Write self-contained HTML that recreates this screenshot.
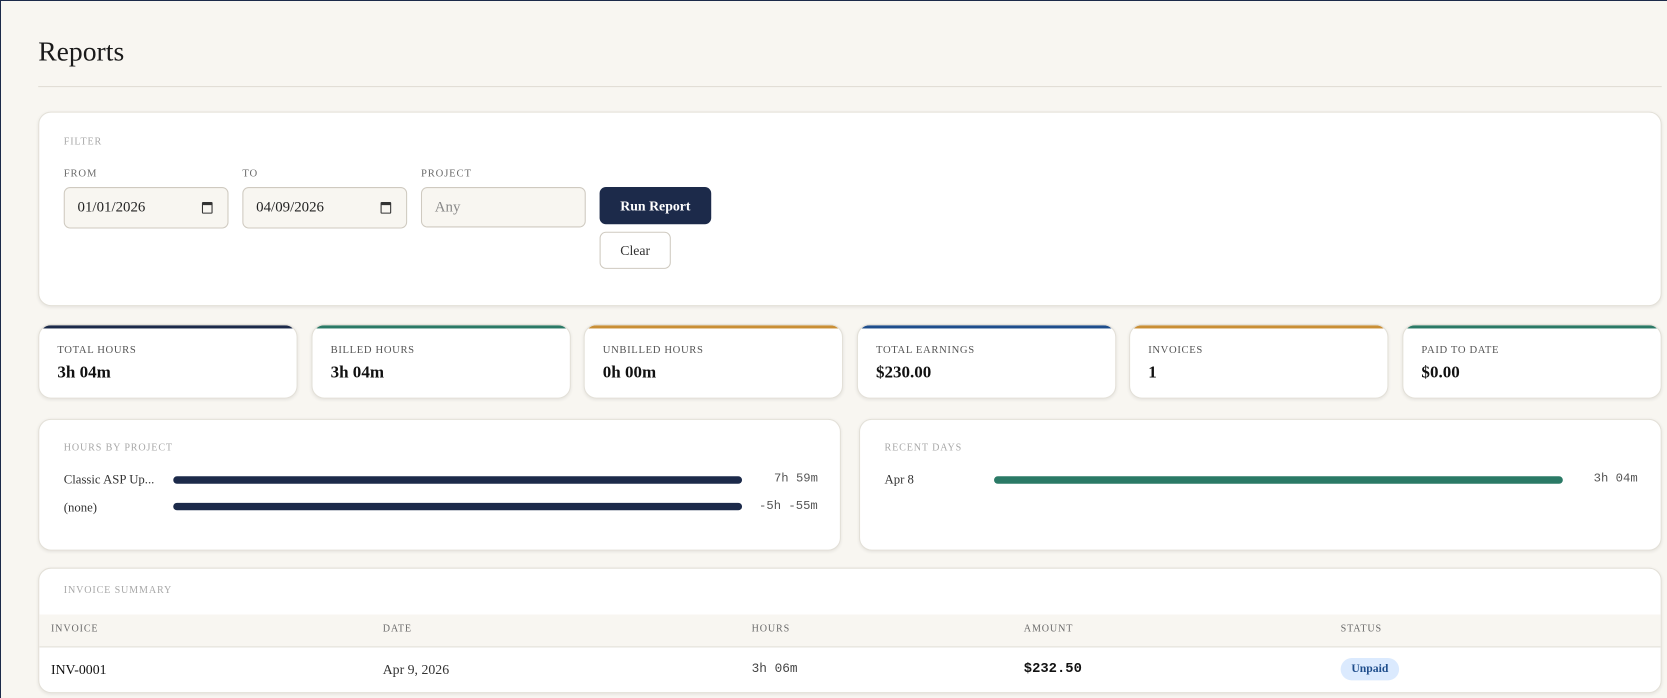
<!DOCTYPE html>
<html><head><style>
*{box-sizing:border-box;margin:0;padding:0}
html,body{width:1667px;height:698px;overflow:hidden}
body{background:#f8f6f1;font-family:"Liberation Serif",serif;color:#1a1a1a;position:relative;border-left:1px solid #1c2a4a;border-top:1px solid #1c2a4a}
#w{position:absolute;left:0;top:0;width:1568px;height:657px;transform:scale(1.0632);transform-origin:0 0}
.abs{position:absolute}
h1{position:absolute;left:35px;top:33px;font-weight:400;font-size:26px;color:#1a1a1a}
.hr{left:35px;top:80px;width:1527px;height:1px;background:#e0ddd5}
.card{position:absolute;background:#fff;border:1px solid #e3e0d8;border-radius:12px;box-shadow:0 1px 3px rgba(0,0,0,.08)}
.lbl{font-size:10px;letter-spacing:.8px;color:#6b6b6b;text-transform:uppercase}
.sec{font-size:9.5px;letter-spacing:.8px;color:#a8a8a8}
.inp{position:absolute;top:175px;height:39px;background:#f8f6f1;border:1px solid #cfcac0;border-radius:6px;font-size:14px;padding:11px 0 0 12px;color:#222}
.cal{position:absolute;right:14px;top:13px;width:10px;height:11px;border:1.5px solid #333;border-top-width:3px;border-radius:1px}
.stat{top:304px;width:244px;height:70px;border-radius:12px;overflow:hidden}
.stat .bar{position:absolute;left:0;right:0;top:0;height:3px}
.stat .l{position:absolute;left:17px;top:18px;font-size:10px;letter-spacing:.6px;color:#555}
.stat .v{position:absolute;left:17px;top:36px;font-size:16px;font-weight:700;color:#111}
.mono{font-family:"Liberation Mono",monospace}
.pb{position:absolute;height:7px;border-radius:4px}
</style></head><body><div id="w">
<h1>Reports</h1>
<div class="abs hr"></div>

<div class="card" style="left:35px;top:104px;width:1527px;height:183px"></div>
<div class="abs sec" style="left:59px;top:128px">FILTER</div>
<div class="abs lbl" style="left:59px;top:157px">FROM</div>
<div class="abs lbl" style="left:227px;top:157px">TO</div>
<div class="abs lbl" style="left:395px;top:157px">PROJECT</div>
<div class="inp" style="left:59px;width:155px">01/01/2026<span class="cal"></span></div>
<div class="inp" style="left:227px;width:155px">04/09/2026<span class="cal"></span></div>
<div class="inp" style="left:395px;width:155px;height:38px;color:#888;font-size:14px">Any</div>
<div class="abs" style="left:563px;top:175px;width:105px;height:35px;background:#1c2a4a;border-radius:6px;color:#fff;font-weight:700;font-size:13px;text-align:center;line-height:35px">Run Report</div>
<div class="abs" style="left:563px;top:217px;width:67px;height:35px;background:#fff;border:1px solid #cfcac0;border-radius:6px;font-size:13px;text-align:center;line-height:33px;color:#333">Clear</div>

<div class="card stat" style="left:35px"><div class="bar" style="background:#1c2a4a"></div><div class="l">TOTAL HOURS</div><div class="v">3h 04m</div></div>
<div class="card stat" style="left:292px"><div class="bar" style="background:#2b7a66"></div><div class="l">BILLED HOURS</div><div class="v">3h 04m</div></div>
<div class="card stat" style="left:548px"><div class="bar" style="background:#c98f36"></div><div class="l">UNBILLED HOURS</div><div class="v">0h 00m</div></div>
<div class="card stat" style="left:805px"><div class="bar" style="background:#1f4e8c"></div><div class="l">TOTAL EARNINGS</div><div class="v">$230.00</div></div>
<div class="card stat" style="left:1061px"><div class="bar" style="background:#c98f36"></div><div class="l">INVOICES</div><div class="v">1</div></div>
<div class="card stat" style="left:1318px"><div class="bar" style="background:#2b7a66"></div><div class="l">PAID TO DATE</div><div class="v">$0.00</div></div>

<div class="card" style="left:35px;top:393px;width:755px;height:124px"></div>
<div class="abs sec" style="left:59px;top:416px">HOURS BY PROJECT</div>
<div class="abs" style="left:59px;top:443px;font-size:12px;color:#333">Classic ASP Up...</div>
<div class="pb" style="left:162px;top:447px;width:535px;background:#1c2a4a"></div>
<div class="abs mono" style="left:727px;top:443px;font-size:11.5px;color:#555">7h 59m</div>
<div class="abs" style="left:59px;top:469px;font-size:12px;color:#333">(none)</div>
<div class="pb" style="left:162px;top:472px;width:535px;background:#1c2a4a"></div>
<div class="abs mono" style="left:713px;top:469px;font-size:11.5px;color:#555">-5h -55m</div>

<div class="card" style="left:807px;top:393px;width:755px;height:124px"></div>
<div class="abs sec" style="left:831px;top:416px">RECENT DAYS</div>
<div class="abs" style="left:831px;top:443px;font-size:12px;color:#333">Apr 8</div>
<div class="pb" style="left:934px;top:447px;width:535px;background:#2b7a66"></div>
<div class="abs mono" style="left:1498px;top:443px;font-size:11.5px;color:#555">3h 04m</div>

<div class="card" style="left:35px;top:533px;width:1527px;height:118px;overflow:hidden">
<div style="position:absolute;left:0;right:0;top:43px;height:31px;background:#f8f6f1;border-bottom:1px solid #e3e0d8"></div>
</div>
<div class="abs sec" style="left:59px;top:550px">INVOICE SUMMARY</div>
<div class="abs lbl" style="left:47px;top:586px;font-size:9.5px">INVOICE</div>
<div class="abs lbl" style="left:359px;top:586px;font-size:9.5px">DATE</div>
<div class="abs lbl" style="left:706px;top:586px;font-size:9.5px">HOURS</div>
<div class="abs lbl" style="left:962px;top:586px;font-size:9.5px">AMOUNT</div>
<div class="abs lbl" style="left:1260px;top:586px;font-size:9.5px">STATUS</div>
<div class="abs" style="left:47px;top:621px;font-size:13px;color:#111">INV-0001</div>
<div class="abs" style="left:359px;top:621px;font-size:13px;color:#333">Apr 9, 2026</div>
<div class="abs mono" style="left:706px;top:621px;font-size:12px;color:#444">3h 06m</div>
<div class="abs mono" style="left:962px;top:620px;font-size:13px;font-weight:700;color:#111">$232.50</div>
<div class="abs" style="left:1260px;top:618px;width:55px;height:21px;border-radius:11px;background:#dbeafe;color:#1f4e8c;font-size:11px;font-weight:700;text-align:center;line-height:21px">Unpaid</div>
</div></body></html>
